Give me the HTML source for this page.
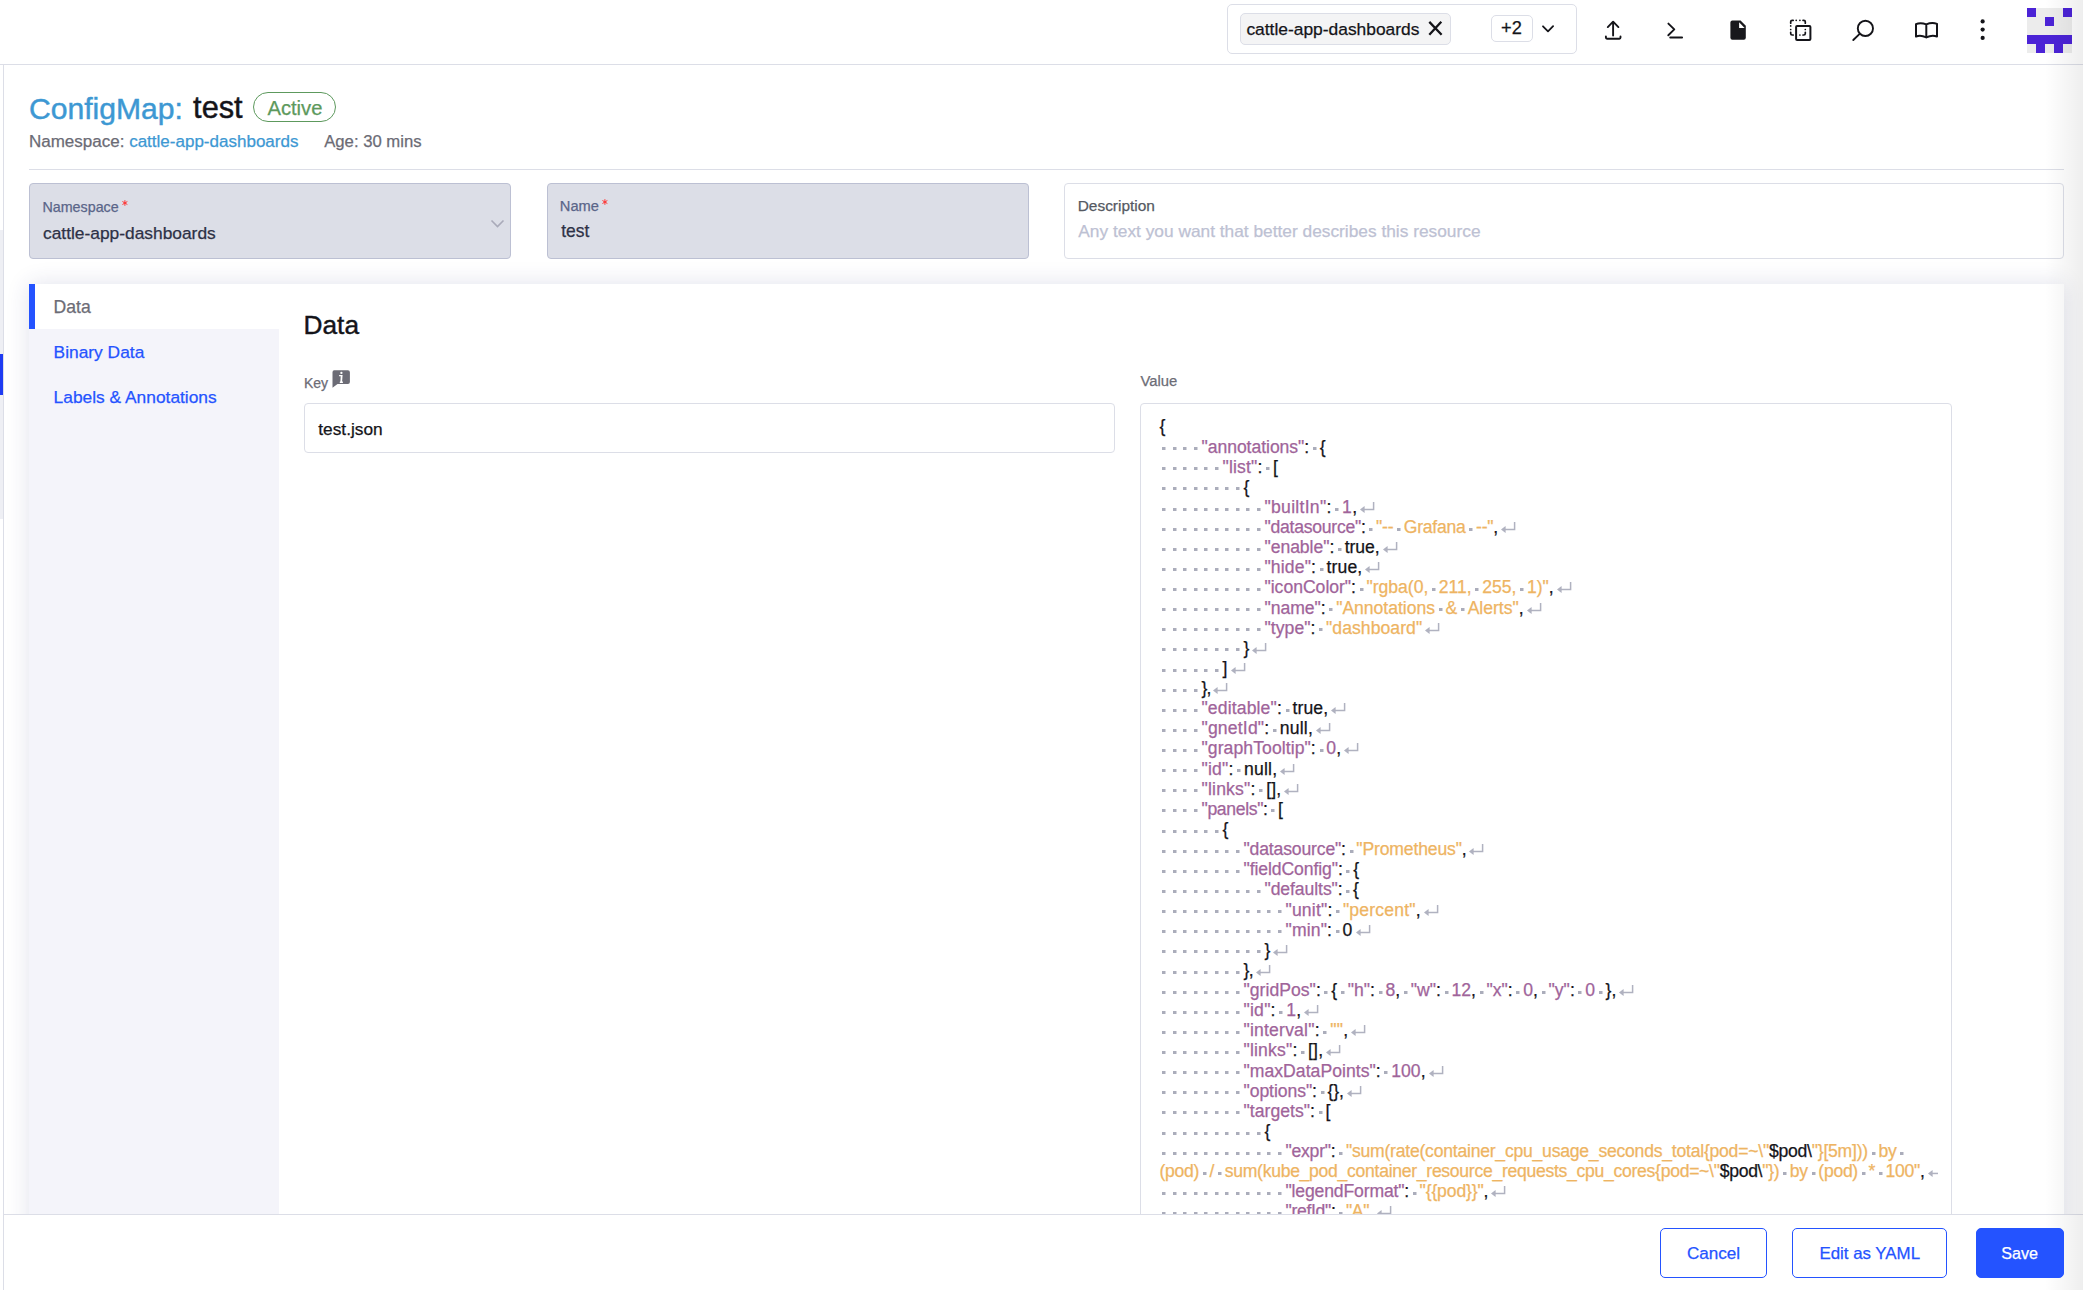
<!DOCTYPE html>
<html><head><meta charset="utf-8">
<style>
*{box-sizing:border-box;margin:0;padding:0}
html,body{width:2083px;height:1290px;overflow:hidden;background:#fff}
body{font-family:"Liberation Sans",sans-serif;color:#141419;position:relative;-webkit-text-stroke:0.25px currentColor}
.a{position:absolute;white-space:nowrap}
.hdr{left:0;top:0;width:2083px;height:65px;border-bottom:1px solid #dcdee7;background:#fff}
.vline{left:3px;top:64px;width:1px;height:1226px;background:#dcdee7}
.strip{left:0;top:230px;width:3px;height:289px;background:#eeeff4}
.stripblue{left:0;top:354px;width:3px;height:41px;background:#1f3cf2}
.box{border:1px solid #dcdee7;border-radius:5px}
.t17{font-size:17.3px;line-height:20px}
.tabs{left:29px;top:284px;width:2035px;height:1000px;background:#fff;box-shadow:0 0 22px rgba(40,50,120,.14)}
.tabcol{left:29px;top:284px;width:250px;height:1000px;background:#f4f4fa}
.code{left:1141px;top:404px;width:797px;height:810px;overflow:hidden}
.row{position:absolute;left:18.5px;font-size:17.6px;line-height:20.13px;white-space:nowrap;color:#141419}
.row i{display:inline-block;width:10.5px;height:3.4px;vertical-align:2px;background:linear-gradient(#abadbb,#abadbb) no-repeat 2.7px 0/3.5px 3.4px}
.row i.m{background-position:3.7px 0}
.row b{font-weight:normal}
.k,.n{color:#a0649a}
.s{color:#eeb462}
.p{color:#141419}
.ar{vertical-align:-1px;margin-left:3px}
.footer{left:4px;top:1214px;width:2079px;height:76px;background:#fff;border-top:1px solid #dcdee7}
.btn{border:1px solid #2453ff;border-radius:5px;color:#2453ff;font-size:17.3px;text-align:center;line-height:48px}
</style></head><body>
<!-- header -->
<div class="a hdr"></div>
<div class="a vline"></div>
<div class="a strip"></div>
<div class="a stripblue"></div>

<div class="a box" style="left:1227px;top:4px;width:350px;height:50px"></div>
<div class="a box" style="left:1240px;top:13px;width:211px;height:32px;background:#f4f4f5"></div>
<div class="a" style="left:1246.40px;top:8.70px;font-size:17.402px;line-height:40px;color:#141419">cattle-app-dashboards</div>
<div class="a box" style="left:1491px;top:15px;width:42px;height:27px"></div>
<div class="a" style="left:1501.00px;top:7.80px;font-size:18.261px;line-height:40px">+2</div>
<svg class="a" style="left:0;top:0" width="2083" height="64" viewBox="0 0 2083 64">
<g fill="none" stroke="#141419" stroke-linecap="round" stroke-linejoin="round">
<path d="M1429.3 21.9L1441.6 34.7M1441.3 21.8L1429.3 34.7" stroke-width="2.3" stroke-linecap="butt"/>
<path d="M1543 26.3L1548 31.3L1553.1 26.2" stroke-width="1.8"/>
<path d="M1613.1 35.6V21.9M1607.8 27.1L1613.1 21.7L1618.4 27.1M1605.9 36.4V37.6Q1605.9 38.7 1607 38.7H1619.4Q1620.5 38.7 1620.5 37.6V36.4" stroke-width="1.9"/>
<path d="M1668.4 23.6L1674.3 29.4L1668.3 35.3M1670.2 37.5H1682.1" stroke-width="1.9"/>
<path d="M1790.7 23.2V21.8Q1790.7 20.3 1792.2 20.3H1793.2M1803 20.3H1803.8Q1805.3 20.3 1805.3 21.8V23.2M1790.7 32.3V33.5Q1790.7 35 1792.2 35H1793.2M1803 35H1803.8Q1805.3 35 1805.3 33.5V32.3M1796.2 20.3h0.01M1799.9 20.3h0.01M1790.7 25.9h0.01M1790.7 29.5h0.01M1805.3 29.5h0.01M1799.9 35h0.01" stroke-width="1.7"/>
<rect x="1796.1" y="25.9" width="14.3" height="14" rx="1" stroke-width="2"/>
<circle cx="1865.4" cy="28.4" r="7.6" stroke-width="1.9"/>
<path d="M1859.4 34.1L1853.3 40" stroke-width="1.9"/>
<path d="M1916 24.2Q1920.5 22 1926.3 24.4Q1932 22 1937 23.9V36.5Q1932 34.5 1926.3 37.4Q1920.5 34.5 1916 36.5Z M1926.3 24.4V37.4" stroke-width="2"/>
</g>
<path d="M1732.4 20.6H1740.6L1745.8 25.8V37.8Q1745.8 39.8 1743.8 39.8H1732.4Q1730.4 39.8 1730.4 37.8V22.6Q1730.4 20.6 1732.4 20.6Z" fill="#18181c"/>
<path d="M1739.1 22.3V27.9H1744.6Z" fill="#fff"/>
<g fill="#141419"><circle cx="1982.65" cy="21.4" r="2.1"/><circle cx="1982.65" cy="29.6" r="2.1"/><circle cx="1982.65" cy="37.9" r="2.1"/></g>
</svg>
<svg class="a" style="left:2027px;top:8px" width="45" height="45" viewBox="0 0 5 5" shape-rendering="crispEdges"><rect width="5" height="5" fill="#ececec"/><g fill="#4b23d6"><rect x="0" y="0" width="1" height="1"/><rect x="4" y="0" width="1" height="1"/><rect x="2" y="1" width="1" height="1"/><rect x="0" y="3" width="5" height="1"/><rect x="1" y="4" width="1" height="1"/><rect x="3" y="4" width="1" height="1"/></g></svg>

<!-- title -->
<div class="a" style="left:28.90px;top:88.90px;font-size:30.120px;line-height:40px;color:#3d98d3;-webkit-text-stroke:0.45px currentColor">ConfigMap:</div>
<div class="a" style="left:193.10px;top:87.70px;font-size:30.754px;line-height:40px;color:#141419;-webkit-text-stroke:0.45px currentColor">test</div>
<div class="a" style="left:253px;top:92px;width:83px;height:30px;border:1px solid #5d995d;border-radius:15px"></div>
<div class="a" style="left:267.40px;top:88.00px;font-size:20.223px;line-height:40px;color:#5d995d">Active</div>
<div class="a" style="left:28.90px;top:122.00px;font-size:17.025px;line-height:40px;color:#6b6b75">Namespace: <span style="color:#3d98d3">cattle-app-dashboards</span></div>
<div class="a" style="left:324.20px;top:122.00px;font-size:16.692px;line-height:40px;color:#6b6b75">Age: 30 mins</div>
<div class="a" style="left:29px;top:169px;width:2035px;height:1px;background:#dcdee7"></div>

<!-- tabs container + shadow -->
<div class="a tabs"></div>
<div class="a tabcol"></div>
<div class="a" style="left:29px;top:284px;width:250px;height:45px;background:#fff"></div>
<div class="a" style="left:29px;top:284px;width:6px;height:45px;background:#2453ff"></div>
<div class="a" style="left:53.60px;top:287.00px;font-size:17.597px;line-height:40px;color:#6c6c76">Data</div>
<div class="a" style="left:53.60px;top:332.00px;font-size:17.379px;line-height:40px;color:#2453ff">Binary Data</div>
<div class="a" style="left:53.60px;top:377.00px;font-size:17.365px;line-height:40px;color:#2453ff">Labels &amp; Annotations</div>

<!-- form -->
<div class="a" style="left:29px;top:183px;width:482px;height:76px;background:#dcdee7;border:1px solid #bcc0d3;border-radius:4px"></div>
<div class="a" style="left:42.40px;top:186.60px;font-size:14.309px;line-height:40px;color:#5a6589">Namespace</div>
<svg class="a" style="left:121px;top:199px" width="8" height="8" viewBox="0 0 8 8"><path d="M3.9 1.2V6.8M1.45 2.5L6.35 5.5M6.35 2.5L1.45 5.5" stroke="#f33" stroke-width="1"/></svg>
<div class="a" style="left:43.00px;top:212.80px;font-size:17.362px;line-height:40px;color:#2d3146">cattle-app-dashboards</div>
<svg class="a" style="left:490px;top:219px" width="15" height="10" viewBox="0 0 15 10"><path d="M1.5 1.5L7.5 7.5L13.5 1.5" fill="none" stroke="#a9aab9" stroke-width="1.6"/></svg>
<div class="a" style="left:547px;top:183px;width:482px;height:76px;background:#dcdee7;border:1px solid #bcc0d3;border-radius:4px"></div>
<div class="a" style="left:559.80px;top:186.00px;font-size:14.663px;line-height:40px;color:#5a6589">Name</div>
<svg class="a" style="left:601px;top:198px" width="8" height="8" viewBox="0 0 8 8"><path d="M3.9 1.2V6.8M1.45 2.5L6.35 5.5M6.35 2.5L1.45 5.5" stroke="#f33" stroke-width="1"/></svg>
<div class="a" style="left:561.20px;top:211.00px;font-size:17.431px;line-height:40px;color:#2d3146">test</div>
<div class="a" style="left:1064px;top:183px;width:1000px;height:76px;background:#fff;border:1px solid #dcdee7;border-radius:4px"></div>
<div class="a" style="left:1077.70px;top:186.00px;font-size:15.440px;line-height:40px;color:#555962">Description</div>
<div class="a" style="left:1078.30px;top:210.90px;font-size:17.326px;line-height:40px;color:#bdc1d3">Any text you want that better describes this resource</div>

<!-- data content -->
<div class="a" style="left:303.50px;top:305.10px;font-size:26.307px;line-height:40px;color:#141419;-webkit-text-stroke:0.4px currentColor">Data</div>
<div class="a" style="left:303.90px;top:362.80px;font-size:14.049px;line-height:40px;color:#6c6c76">Key</div>
<svg class="a" style="left:331px;top:369px" width="20" height="20" viewBox="0 0 20 20"><path d="M3.2 1.2H16.9Q18.9 1.2 18.9 3.2V13.1Q18.9 15.1 16.9 15.1H6.5L1.5 18.8V3.2Q1.5 1.2 3.2 1.2Z" fill="#6c6c76"/><circle cx="10.4" cy="3.9" r="1.15" fill="#fff"/><path d="M8.1 6.0H11.6L11.1 12.6H11.9V13.9H8.7L8.9 12.6H9.4L9.7 7.2H8.1Z" fill="#fff"/></svg>
<div class="a" style="left:304px;top:403px;width:811px;height:50px;border:1px solid #dcdee7;border-radius:4px;background:#fff"></div>
<div class="a" style="left:318.30px;top:408.60px;font-size:17.302px;line-height:40px">test.json</div>
<div class="a" style="left:1140.50px;top:361.00px;font-size:14.842px;line-height:40px;color:#6c6c76">Value</div>
<div class="a" style="left:1140px;top:403px;width:812px;height:900px;border:1px solid #dcdee7;border-radius:4px;background:#fff"></div>
<div class="a code"><div class=row style="top:12.40px;letter-spacing:-24.300px">{</div>
<div class=row style="top:32.53px;letter-spacing:-0.053px"><i></i><i></i><i></i><i></i><b class=k>"annotations"</b>:<i class=m></i>{</div>
<div class=row style="top:52.66px;letter-spacing:0.163px"><i></i><i></i><i></i><i></i><i></i><i></i><b class=k>"list"</b>:<i class=m></i>[</div>
<div class=row style="top:72.79px;letter-spacing:-27.000px"><i></i><i></i><i></i><i></i><i></i><i></i><i></i><i></i>{</div>
<div class=row style="top:92.92px;letter-spacing:0.275px"><i></i><i></i><i></i><i></i><i></i><i></i><i></i><i></i><i></i><i></i><b class=k>"builtIn"</b>:<i class=m></i><b class=n>1</b>,<svg class=ar width="15" height="12" viewBox="0 0 15 12"><path d="M13.6 0V7.45H4" fill="none" stroke="#b0b2c0" stroke-width="1.5"/><path d="M0 7.45L4.6 3.9V11.05Z" fill="#b0b2c0"/></svg></div>
<div class=row style="top:113.05px;letter-spacing:-0.256px"><i></i><i></i><i></i><i></i><i></i><i></i><i></i><i></i><i></i><i></i><b class=k>"datasource"</b>:<i class=m></i><b class=s>"--</b><i class=m></i><b class=s>Grafana</b><i class=m></i><b class=s>--"</b>,<svg class=ar width="15" height="12" viewBox="0 0 15 12"><path d="M13.6 0V7.45H4" fill="none" stroke="#b0b2c0" stroke-width="1.5"/><path d="M0 7.45L4.6 3.9V11.05Z" fill="#b0b2c0"/></svg></div>
<div class=row style="top:133.18px;letter-spacing:-0.057px"><i></i><i></i><i></i><i></i><i></i><i></i><i></i><i></i><i></i><i></i><b class=k>"enable"</b>:<i class=m></i>true,<svg class=ar width="15" height="12" viewBox="0 0 15 12"><path d="M13.6 0V7.45H4" fill="none" stroke="#b0b2c0" stroke-width="1.5"/><path d="M0 7.45L4.6 3.9V11.05Z" fill="#b0b2c0"/></svg></div>
<div class=row style="top:153.31px;letter-spacing:0.125px"><i></i><i></i><i></i><i></i><i></i><i></i><i></i><i></i><i></i><i></i><b class=k>"hide"</b>:<i class=m></i>true,<svg class=ar width="15" height="12" viewBox="0 0 15 12"><path d="M13.6 0V7.45H4" fill="none" stroke="#b0b2c0" stroke-width="1.5"/><path d="M0 7.45L4.6 3.9V11.05Z" fill="#b0b2c0"/></svg></div>
<div class=row style="top:173.44px;letter-spacing:-0.019px"><i></i><i></i><i></i><i></i><i></i><i></i><i></i><i></i><i></i><i></i><b class=k>"iconColor"</b>:<i class=m></i><b class=s>"rgba(0,</b><i class=m></i><b class=s>211,</b><i class=m></i><b class=s>255,</b><i class=m></i><b class=s>1)"</b>,<svg class=ar width="15" height="12" viewBox="0 0 15 12"><path d="M13.6 0V7.45H4" fill="none" stroke="#b0b2c0" stroke-width="1.5"/><path d="M0 7.45L4.6 3.9V11.05Z" fill="#b0b2c0"/></svg></div>
<div class=row style="top:193.57px;letter-spacing:-0.032px"><i></i><i></i><i></i><i></i><i></i><i></i><i></i><i></i><i></i><i></i><b class=k>"name"</b>:<i class=m></i><b class=s>"Annotations</b><i class=m></i><b class=s>&amp;</b><i class=m></i><b class=s>Alerts"</b>,<svg class=ar width="15" height="12" viewBox="0 0 15 12"><path d="M13.6 0V7.45H4" fill="none" stroke="#b0b2c0" stroke-width="1.5"/><path d="M0 7.45L4.6 3.9V11.05Z" fill="#b0b2c0"/></svg></div>
<div class=row style="top:213.70px;letter-spacing:0.050px"><i></i><i></i><i></i><i></i><i></i><i></i><i></i><i></i><i></i><i></i><b class=k>"type"</b>:<i class=m></i><b class=s>"dashboard"</b><svg class=ar width="15" height="12" viewBox="0 0 15 12"><path d="M13.6 0V7.45H4" fill="none" stroke="#b0b2c0" stroke-width="1.5"/><path d="M0 7.45L4.6 3.9V11.05Z" fill="#b0b2c0"/></svg></div>
<div class=row style="top:233.83px;letter-spacing:-0.300px"><i></i><i></i><i></i><i></i><i></i><i></i><i></i><i></i>}<svg class=ar width="15" height="12" viewBox="0 0 15 12"><path d="M13.6 0V7.45H4" fill="none" stroke="#b0b2c0" stroke-width="1.5"/><path d="M0 7.45L4.6 3.9V11.05Z" fill="#b0b2c0"/></svg></div>
<div class=row style="top:253.96px;letter-spacing:0.900px"><i></i><i></i><i></i><i></i><i></i><i></i>]<svg class=ar width="15" height="12" viewBox="0 0 15 12"><path d="M13.6 0V7.45H4" fill="none" stroke="#b0b2c0" stroke-width="1.5"/><path d="M0 7.45L4.6 3.9V11.05Z" fill="#b0b2c0"/></svg></div>
<div class=row style="top:274.09px;letter-spacing:-0.900px"><i></i><i></i><i></i><i></i>},<svg class=ar width="15" height="12" viewBox="0 0 15 12"><path d="M13.6 0V7.45H4" fill="none" stroke="#b0b2c0" stroke-width="1.5"/><path d="M0 7.45L4.6 3.9V11.05Z" fill="#b0b2c0"/></svg></div>
<div class=row style="top:294.22px;letter-spacing:0.125px"><i></i><i></i><i></i><i></i><b class=k>"editable"</b>:<i class=m></i>true,<svg class=ar width="15" height="12" viewBox="0 0 15 12"><path d="M13.6 0V7.45H4" fill="none" stroke="#b0b2c0" stroke-width="1.5"/><path d="M0 7.45L4.6 3.9V11.05Z" fill="#b0b2c0"/></svg></div>
<div class=row style="top:314.35px;letter-spacing:0.171px"><i></i><i></i><i></i><i></i><b class=k>"gnetId"</b>:<i class=m></i>null,<svg class=ar width="15" height="12" viewBox="0 0 15 12"><path d="M13.6 0V7.45H4" fill="none" stroke="#b0b2c0" stroke-width="1.5"/><path d="M0 7.45L4.6 3.9V11.05Z" fill="#b0b2c0"/></svg></div>
<div class=row style="top:334.48px;letter-spacing:0.071px"><i></i><i></i><i></i><i></i><b class=k>"graphTooltip"</b>:<i class=m></i><b class=n>0</b>,<svg class=ar width="15" height="12" viewBox="0 0 15 12"><path d="M13.6 0V7.45H4" fill="none" stroke="#b0b2c0" stroke-width="1.5"/><path d="M0 7.45L4.6 3.9V11.05Z" fill="#b0b2c0"/></svg></div>
<div class=row style="top:354.61px;letter-spacing:0.190px"><i></i><i></i><i></i><i></i><b class=k>"id"</b>:<i class=m></i>null,<svg class=ar width="15" height="12" viewBox="0 0 15 12"><path d="M13.6 0V7.45H4" fill="none" stroke="#b0b2c0" stroke-width="1.5"/><path d="M0 7.45L4.6 3.9V11.05Z" fill="#b0b2c0"/></svg></div>
<div class=row style="top:374.74px;letter-spacing:0.191px"><i></i><i></i><i></i><i></i><b class=k>"links"</b>:<i class=m></i>[],<svg class=ar width="15" height="12" viewBox="0 0 15 12"><path d="M13.6 0V7.45H4" fill="none" stroke="#b0b2c0" stroke-width="1.5"/><path d="M0 7.45L4.6 3.9V11.05Z" fill="#b0b2c0"/></svg></div>
<div class=row style="top:394.87px;letter-spacing:-0.350px"><i></i><i></i><i></i><i></i><b class=k>"panels"</b>:<i class=m></i>[</div>
<div class=row style="top:415.00px;letter-spacing:-18.900px"><i></i><i></i><i></i><i></i><i></i><i></i>{</div>
<div class=row style="top:435.13px;letter-spacing:-0.162px"><i></i><i></i><i></i><i></i><i></i><i></i><i></i><i></i><b class=k>"datasource"</b>:<i class=m></i><b class=s>"Prometheus"</b>,<svg class=ar width="15" height="12" viewBox="0 0 15 12"><path d="M13.6 0V7.45H4" fill="none" stroke="#b0b2c0" stroke-width="1.5"/><path d="M0 7.45L4.6 3.9V11.05Z" fill="#b0b2c0"/></svg></div>
<div class=row style="top:455.26px;letter-spacing:-0.093px"><i></i><i></i><i></i><i></i><i></i><i></i><i></i><i></i><b class=k>"fieldConfig"</b>:<i class=m></i>{</div>
<div class=row style="top:475.39px;letter-spacing:-0.083px"><i></i><i></i><i></i><i></i><i></i><i></i><i></i><i></i><i></i><i></i><b class=k>"defaults"</b>:<i class=m></i>{</div>
<div class=row style="top:495.52px;letter-spacing:0.171px"><i></i><i></i><i></i><i></i><i></i><i></i><i></i><i></i><i></i><i></i><i></i><i></i><b class=k>"unit"</b>:<i class=m></i><b class=s>"percent"</b>,<svg class=ar width="15" height="12" viewBox="0 0 15 12"><path d="M13.6 0V7.45H4" fill="none" stroke="#b0b2c0" stroke-width="1.5"/><path d="M0 7.45L4.6 3.9V11.05Z" fill="#b0b2c0"/></svg></div>
<div class=row style="top:515.65px;letter-spacing:0.143px"><i></i><i></i><i></i><i></i><i></i><i></i><i></i><i></i><i></i><i></i><i></i><i></i><b class=k>"min"</b>:<i class=m></i><b class=p>0</b><svg class=ar width="15" height="12" viewBox="0 0 15 12"><path d="M13.6 0V7.45H4" fill="none" stroke="#b0b2c0" stroke-width="1.5"/><path d="M0 7.45L4.6 3.9V11.05Z" fill="#b0b2c0"/></svg></div>
<div class=row style="top:535.78px;letter-spacing:-0.400px"><i></i><i></i><i></i><i></i><i></i><i></i><i></i><i></i><i></i><i></i>}<svg class=ar width="15" height="12" viewBox="0 0 15 12"><path d="M13.6 0V7.45H4" fill="none" stroke="#b0b2c0" stroke-width="1.5"/><path d="M0 7.45L4.6 3.9V11.05Z" fill="#b0b2c0"/></svg></div>
<div class=row style="top:555.91px;letter-spacing:-0.600px"><i></i><i></i><i></i><i></i><i></i><i></i><i></i><i></i>},<svg class=ar width="15" height="12" viewBox="0 0 15 12"><path d="M13.6 0V7.45H4" fill="none" stroke="#b0b2c0" stroke-width="1.5"/><path d="M0 7.45L4.6 3.9V11.05Z" fill="#b0b2c0"/></svg></div>
<div class=row style="top:576.04px;letter-spacing:0.024px"><i></i><i></i><i></i><i></i><i></i><i></i><i></i><i></i><b class=k>"gridPos"</b>:<i class=m></i>{<i class=m></i><b class=k>"h"</b>:<i class=m></i><b class=n>8</b>,<i class=m></i><b class=k>"w"</b>:<i class=m></i><b class=n>12</b>,<i class=m></i><b class=k>"x"</b>:<i class=m></i><b class=n>0</b>,<i class=m></i><b class=k>"y"</b>:<i class=m></i><b class=n>0</b><i class=m></i>},<svg class=ar width="15" height="12" viewBox="0 0 15 12"><path d="M13.6 0V7.45H4" fill="none" stroke="#b0b2c0" stroke-width="1.5"/><path d="M0 7.45L4.6 3.9V11.05Z" fill="#b0b2c0"/></svg></div>
<div class=row style="top:596.17px;letter-spacing:0.229px"><i></i><i></i><i></i><i></i><i></i><i></i><i></i><i></i><b class=k>"id"</b>:<i class=m></i><b class=n>1</b>,<svg class=ar width="15" height="12" viewBox="0 0 15 12"><path d="M13.6 0V7.45H4" fill="none" stroke="#b0b2c0" stroke-width="1.5"/><path d="M0 7.45L4.6 3.9V11.05Z" fill="#b0b2c0"/></svg></div>
<div class=row style="top:616.30px;letter-spacing:0.193px"><i></i><i></i><i></i><i></i><i></i><i></i><i></i><i></i><b class=k>"interval"</b>:<i class=m></i><b class=s>""</b>,<svg class=ar width="15" height="12" viewBox="0 0 15 12"><path d="M13.6 0V7.45H4" fill="none" stroke="#b0b2c0" stroke-width="1.5"/><path d="M0 7.45L4.6 3.9V11.05Z" fill="#b0b2c0"/></svg></div>
<div class=row style="top:636.43px;letter-spacing:0.182px"><i></i><i></i><i></i><i></i><i></i><i></i><i></i><i></i><b class=k>"links"</b>:<i class=m></i>[],<svg class=ar width="15" height="12" viewBox="0 0 15 12"><path d="M13.6 0V7.45H4" fill="none" stroke="#b0b2c0" stroke-width="1.5"/><path d="M0 7.45L4.6 3.9V11.05Z" fill="#b0b2c0"/></svg></div>
<div class=row style="top:656.56px;letter-spacing:0.030px"><i></i><i></i><i></i><i></i><i></i><i></i><i></i><i></i><b class=k>"maxDataPoints"</b>:<i class=m></i><b class=n>100</b>,<svg class=ar width="15" height="12" viewBox="0 0 15 12"><path d="M13.6 0V7.45H4" fill="none" stroke="#b0b2c0" stroke-width="1.5"/><path d="M0 7.45L4.6 3.9V11.05Z" fill="#b0b2c0"/></svg></div>
<div class=row style="top:676.69px;letter-spacing:-0.069px"><i></i><i></i><i></i><i></i><i></i><i></i><i></i><i></i><b class=k>"options"</b>:<i class=m></i>{},<svg class=ar width="15" height="12" viewBox="0 0 15 12"><path d="M13.6 0V7.45H4" fill="none" stroke="#b0b2c0" stroke-width="1.5"/><path d="M0 7.45L4.6 3.9V11.05Z" fill="#b0b2c0"/></svg></div>
<div class=row style="top:696.82px;letter-spacing:0.027px"><i></i><i></i><i></i><i></i><i></i><i></i><i></i><i></i><b class=k>"targets"</b>:<i class=m></i>[</div>
<div class=row style="top:716.95px;letter-spacing:-17.100px"><i></i><i></i><i></i><i></i><i></i><i></i><i></i><i></i><i></i><i></i>{</div>
<div class=row style="top:737.08px;letter-spacing:-0.237px"><i></i><i></i><i></i><i></i><i></i><i></i><i></i><i></i><i></i><i></i><i></i><i></i><b class=k>"expr"</b>:<i class=m></i><b class=s>"sum(rate(container_cpu_usage_seconds_total{pod=~\"</b>$pod\<b class=s>"}[5m]))</b><i class=m></i><b class=s>by</b><i class=m></i></div>
<div class=row style="top:757.21px;letter-spacing:-0.293px"><b class=s>(pod)</b><i class=m></i><b class=s>/</b><i class=m></i><b class=s>sum(kube_pod_container_resource_requests_cpu_cores{pod=~\"</b>$pod\<b class=s>"})</b><i class=m></i><b class=s>by</b><i class=m></i><b class=s>(pod)</b><i class=m></i><b class=s>*</b><i class=m></i><b class=s>100"</b>,<svg class=ar width="11" height="12" viewBox="0 0 11 12"><path d="M10.7 7.45H4" fill="none" stroke="#b0b2c0" stroke-width="1.5"/><path d="M0 7.45L4.6 3.9V11.05Z" fill="#b0b2c0"/></svg></div>
<div class=row style="top:777.34px;letter-spacing:-0.156px"><i></i><i></i><i></i><i></i><i></i><i></i><i></i><i></i><i></i><i></i><i></i><i></i><b class=k>"legendFormat"</b>:<i class=m></i><b class=s>"{{pod}}"</b>,<svg class=ar width="15" height="12" viewBox="0 0 15 12"><path d="M13.6 0V7.45H4" fill="none" stroke="#b0b2c0" stroke-width="1.5"/><path d="M0 7.45L4.6 3.9V11.05Z" fill="#b0b2c0"/></svg></div>
<div class=row style="top:797.47px;letter-spacing:-0.333px"><i></i><i></i><i></i><i></i><i></i><i></i><i></i><i></i><i></i><i></i><i></i><i></i><b class=k>"refId"</b>:<i class=m></i><b class=s>"A"</b>,<svg class=ar width="15" height="12" viewBox="0 0 15 12"><path d="M13.6 0V7.45H4" fill="none" stroke="#b0b2c0" stroke-width="1.5"/><path d="M0 7.45L4.6 3.9V11.05Z" fill="#b0b2c0"/></svg></div>
<div class=row style="top:817.60px"><i></i><i></i><i></i><i></i><i></i><i></i><i></i><i></i><i></i><i></i>}<svg class=ar width="15" height="12" viewBox="0 0 15 12"><path d="M13.6 0V7.45H4" fill="none" stroke="#b0b2c0" stroke-width="1.5"/><path d="M0 7.45L4.6 3.9V11.05Z" fill="#b0b2c0"/></svg></div></div>

<!-- footer -->
<div class="a footer"></div>
<div class="a" style="left:2045px;top:0;width:38px;height:1290px;background:linear-gradient(90deg,rgba(0,0,0,0),rgba(0,0,0,.065))"></div>
<div class="a btn" style="left:1660px;top:1228px;width:107px;height:50px"></div><div class="a" style="left:1686.90px;top:1234.00px;font-size:17.101px;line-height:40px;color:#2453ff">Cancel</div>
<div class="a btn" style="left:1792px;top:1228px;width:155px;height:50px"></div><div class="a" style="left:1819.40px;top:1234.00px;font-size:16.894px;line-height:40px;color:#2453ff">Edit as YAML</div>
<div class="a btn" style="left:1976px;top:1228px;width:88px;height:50px;background:#2453ff"></div><div class="a" style="left:2001.30px;top:1233.00px;font-size:16.117px;line-height:40px;color:#fff">Save</div>

<!-- right shade -->

</body></html>
